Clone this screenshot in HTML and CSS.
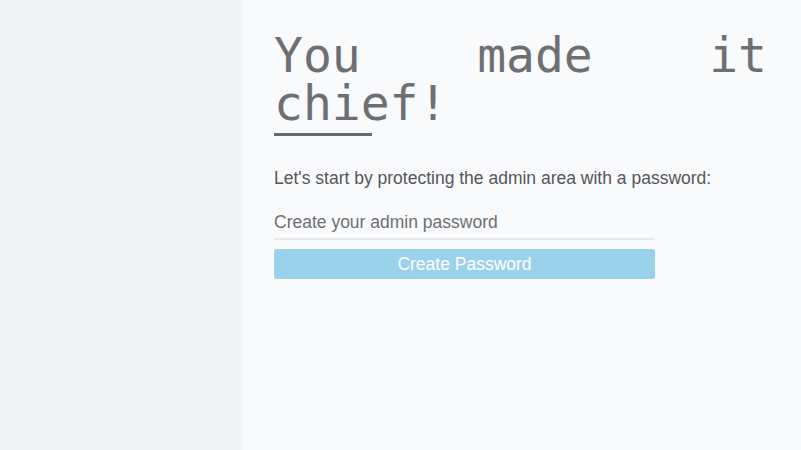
FILE: index.html
```html
<!DOCTYPE html>
<html>
<head>
<meta charset="utf-8">
<link rel="stylesheet" href="styles.css">
</head>
<body>
<div class="layout">
  <aside class="sidebar"></aside>
  <main class="main">
    <h1 class="title">You made it chief!</h1>
    <div class="title-rule"></div>
    <p class="lead">Let's start by protecting the admin area with a password:</p>
    <form class="form">
      <input class="field" type="password" placeholder="Create your admin password">
      <button class="btn" type="button">Create Password</button>
    </form>
  </main>
</div>
</body>
</html>
```

FILE: styles.css
```css
html, body {
  margin: 0;
  padding: 0;
  height: 100%;
}
body {
  font-family: "Liberation Sans", Arial, sans-serif;
  background: #f9fafc;
}
.layout {
  display: flex;
  height: 100%;
}
.sidebar {
  width: 242px;
  flex: none;
  background: #f2f3f5;
}
.main {
  flex: 1;
  background: #f9fafc;
  padding: 31px 34px 0 32px;
}
.title {
  margin: 0;
  font-family: "DejaVu Sans Mono", monospace;
  font-weight: normal;
  font-size: 48px;
  line-height: 48px;
  color: #6e6f72;
  text-align: justify;
}
.title-rule {
  width: 98px;
  height: 3px;
  background: #67686b;
  margin-top: 6px;
}
.lead {
  margin: 32px 0 0;
  font-size: 17.5px;
  line-height: 20px;
  color: #555659;
}
.form {
  display: flex;
  flex-direction: column;
  width: 381px;
  margin-top: 21px;
}
.field {
  font-family: "Liberation Sans", Arial, sans-serif;
  font-size: 17.5px;
  line-height: 21px;
  border: none;
  border-bottom: 2px solid #e6e7ea;
  background: transparent;
  padding: 3px 0 5px;
  height: 31px;
  box-sizing: border-box;
  outline: none;
  color: #555;
}
.field::placeholder {
  color: #6e6f72;
}
.btn {
  margin-top: 9px;
  height: 30px;
  border: none;
  border-radius: 2px;
  background: #9ad2ec;
  color: #ffffff;
  font-family: "Liberation Sans", Arial, sans-serif;
  font-size: 17.5px;
  padding: 0;
}
```
